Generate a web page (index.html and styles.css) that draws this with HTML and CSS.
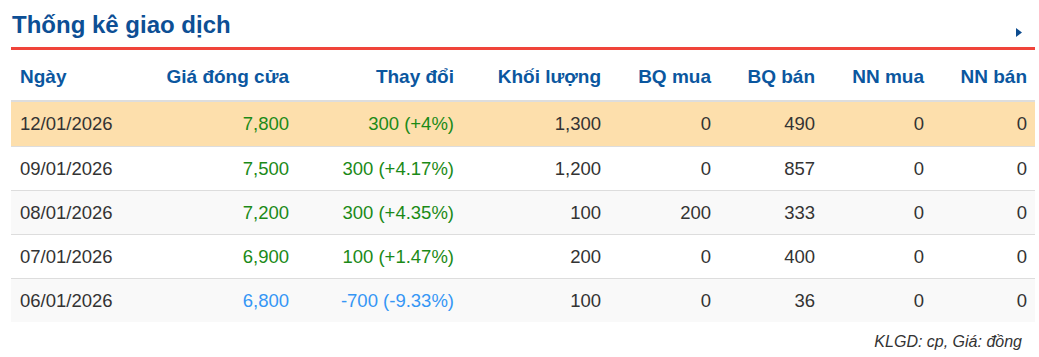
FILE: index.html
```html
<!DOCTYPE html>
<html lang="vi">
<head>
<meta charset="utf-8">
<title>Thống kê giao dịch</title>
<link rel="stylesheet" href="styles.css">
</head>
<body>
<div class="panel">
  <div class="panel-head">
    <h2 class="title">Thống kê giao dịch</h2>
    <svg class="more" width="6" height="9" viewBox="0 0 6 9"><path d="M0 0 L6 4.5 L0 9 Z" fill="#0d4c8f"/></svg>
  </div>
  <table class="stats">
    <colgroup>
      <col style="width:140px"><col style="width:146px"><col style="width:165px"><col style="width:147px">
      <col style="width:110px"><col style="width:104px"><col style="width:109px"><col style="width:103px">
    </colgroup>
    <thead>
      <tr>
        <th class="left">Ngày</th><th>Giá đóng cửa</th><th>Thay đổi</th><th>Khối lượng</th>
        <th>BQ mua</th><th>BQ bán</th><th>NN mua</th><th>NN bán</th>
      </tr>
    </thead>
    <tbody>
      <tr class="hl">
        <td class="left">12/01/2026</td><td class="up">7,800</td><td class="up">300 (+4%)</td><td>1,300</td><td>0</td><td>490</td><td>0</td><td>0</td>
      </tr>
      <tr>
        <td class="left">09/01/2026</td><td class="up">7,500</td><td class="up">300 (+4.17%)</td><td>1,200</td><td>0</td><td>857</td><td>0</td><td>0</td>
      </tr>
      <tr class="alt">
        <td class="left">08/01/2026</td><td class="up">7,200</td><td class="up">300 (+4.35%)</td><td>100</td><td>200</td><td>333</td><td>0</td><td>0</td>
      </tr>
      <tr>
        <td class="left">07/01/2026</td><td class="up">6,900</td><td class="up">100 (+1.47%)</td><td>200</td><td>0</td><td>400</td><td>0</td><td>0</td>
      </tr>
      <tr class="alt last">
        <td class="left">06/01/2026</td><td class="down">6,800</td><td class="down">-700 (-9.33%)</td><td>100</td><td>0</td><td>36</td><td>0</td><td>0</td>
      </tr>
    </tbody>
  </table>
  <p class="note">KLGD: cp, Giá: đồng</p>
</div>
</body>
</html>
```

FILE: styles.css
```css
html, body {
  margin: 0;
  padding: 0;
  background: #ffffff;
  font-family: "Liberation Sans", Arial, sans-serif;
}

.panel {
  width: 1024px;
  margin-left: 11px;
}

.panel-head {
  display: flex;
  align-items: flex-end;
  justify-content: space-between;
  height: 47px;
  border-bottom: 3px solid #f0443a;
  box-sizing: content-box;
}

.title {
  margin: 0 0 8px 1px;
  font-size: 24px;
  line-height: 28px;
  font-weight: bold;
  color: #0d4f95;
}

.more {
  display: block;
  margin: 0 13px 10px 0;
}

.stats {
  width: 1024px;
  border-collapse: collapse;
  table-layout: fixed;
  font-size: 18.5px;
}

.stats th,
.stats td {
  padding: 0 8px;
  text-align: right;
  white-space: nowrap;
}

.stats .left {
  text-align: left;
  padding-left: 9px;
}

.stats th {
  height: 51px;
  padding-top: 3px;
  font-weight: bold;
  color: #0b579f;
  font-size: 19px;
  vertical-align: middle;
  border-bottom: 2px solid #dddddd;
  box-sizing: border-box;
}

.stats td {
  height: 43px;
  color: #333333;
  border-bottom: 1px solid #dddddd;
}

.stats tr.last td {
  border-bottom: none;
}

.stats tr.hl td {
  background: #fddfac;
  height: 44px;
}

.stats tr.alt td {
  background: #f9f9f9;
}

.stats td.up {
  color: #1b8a17;
}

.stats td.down {
  color: #3596f5;
}

.note {
  margin: 11px 13px 0 0;
  text-align: right;
  font-style: italic;
  font-size: 16px;
  color: #333333;
}
```
